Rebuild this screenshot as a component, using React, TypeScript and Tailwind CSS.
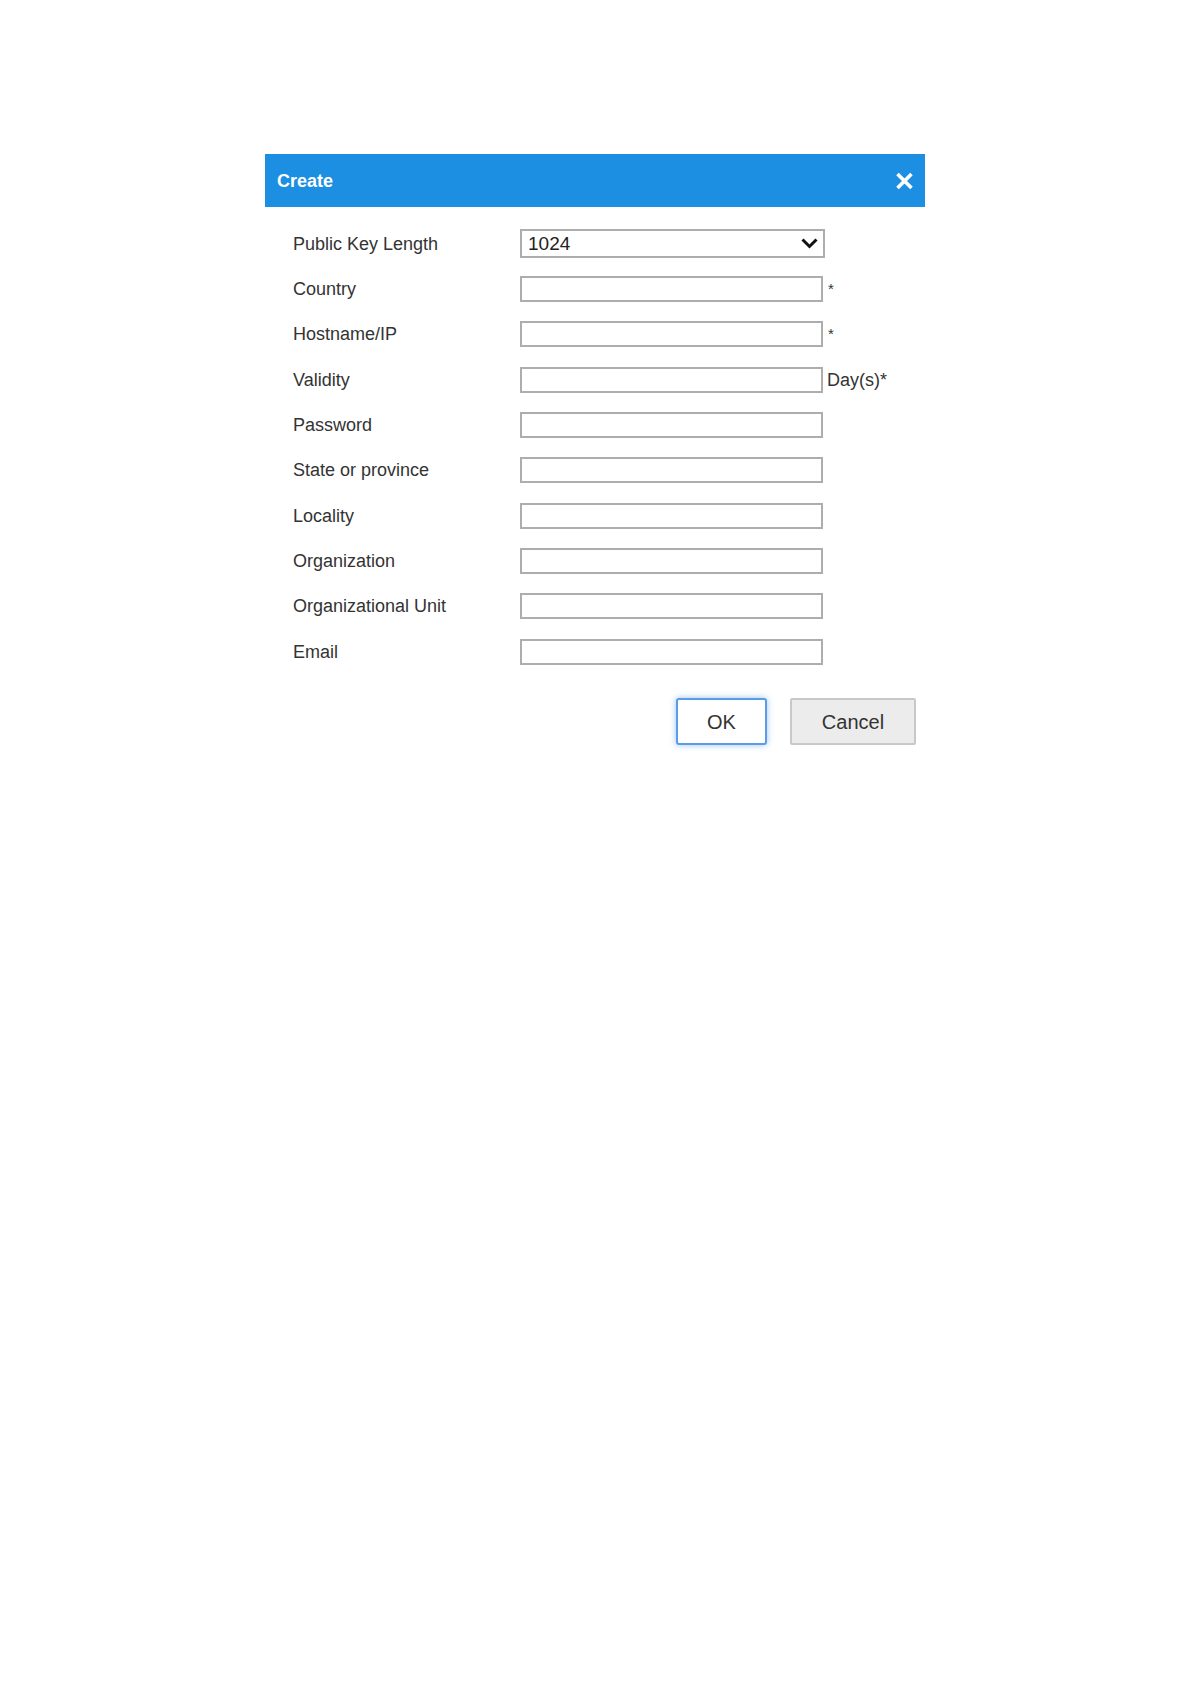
import React from "react";

const fields: { label: string; suffix?: string }[] = [
  { label: "Country", suffix: "*" },
  { label: "Hostname/IP", suffix: "*" },
  { label: "Validity", suffix: "Day(s)*" },
  { label: "Password" },
  { label: "State or province" },
  { label: "Locality" },
  { label: "Organization" },
  { label: "Organizational Unit" },
  { label: "Email" },
];

export default function App() {
  return (
    <div className="min-h-[1684px] w-full bg-white" style={{ fontFamily: '"Liberation Sans", Arial, sans-serif' }}>
      <div className="pt-[154px] pl-[265px]">
        <div className="w-[660px] bg-white">
          <div className="h-[53px] bg-[#1c8fe2] flex items-center justify-between pl-[12px] pr-[11px]">
            <span className="text-white font-bold text-[18px] leading-none">Create</span>
            <svg width="19" height="18" viewBox="0 0 19 18" className="block">
              <path d="M2.5 2 L16.5 16 M16.5 2 L2.5 16" stroke="white" strokeWidth="3.6" strokeLinecap="butt" />
            </svg>
          </div>
          <div className="pt-[14px] pl-[28px]">
            <div className="flex items-center h-[45.33px]">
              <div className="w-[227px] text-[18px] text-[#333] leading-none">Public Key Length</div>
              <div className="w-[305px] h-[29px] border-2 border-[#adadad] flex items-center justify-between pl-[6px] pr-[5px] box-border">
                <span className="text-[19px] text-[#222] leading-none">1024</span>
                <svg width="17" height="11" viewBox="0 0 17 11" className="block">
                  <path d="M1.5 1.5 L8.5 8.5 L15.5 1.5" fill="none" stroke="#111" strokeWidth="3" />
                </svg>
              </div>
            </div>
            {fields.map((f) => (
              <div key={f.label} className="flex items-center h-[45.33px]">
                <div className="w-[227px] text-[18px] text-[#333] leading-none">{f.label}</div>
                <div className="w-[303px] h-[26px] border-2 border-[#adadad] box-border bg-white" />
                {f.suffix === "*" && (
                  <span className="ml-[5px] text-[15px] text-[#333] leading-none -mt-[1px]">*</span>
                )}
                {f.suffix && f.suffix !== "*" && (
                  <span className="ml-[4px] text-[18px] text-[#333] leading-none">{f.suffix}</span>
                )}
              </div>
            ))}
          </div>
          <div className="flex justify-end gap-[23px] pr-[9px] mt-[24px]">
            <button className="w-[91px] h-[47px] bg-white border-2 border-[#5a9de6] rounded-[3px] shadow-[0_0_6px_rgba(74,144,226,0.55)] text-[20px] text-[#333]">
              OK
            </button>
            <button className="w-[126px] h-[47px] bg-[#ececec] border-2 border-[#c8c8c8] rounded-[2px] text-[20px] text-[#333]">
              Cancel
            </button>
          </div>
        </div>
      </div>
    </div>
  );
}
